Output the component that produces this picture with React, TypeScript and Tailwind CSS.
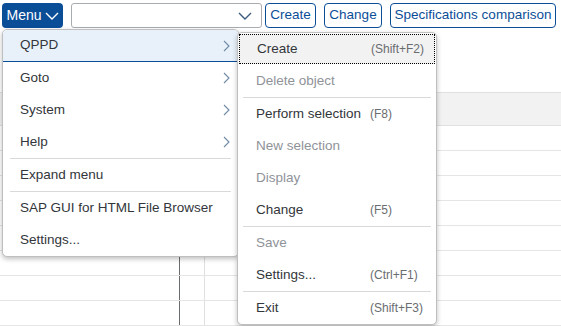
import React from "react";

const Chevron = ({ className = "" }: { className?: string }) => (
  <svg width="7" height="12" viewBox="0 0 7 12" className={className}>
    <path d="M1 1 L6 6 L1 11" fill="none" stroke="currentColor" strokeWidth="1.1" />
  </svg>
);

const ChevronDown = ({ className = "" }: { className?: string }) => (
  <svg width="14" height="8" viewBox="0 0 14 8" className={className}>
    <path d="M1 1 L7 7 L13 1" fill="none" stroke="currentColor" strokeWidth="1.4" />
  </svg>
);

type SubItem = { label: string; shortcut?: string; disabled?: boolean; focused?: boolean } | "sep";

const subItems: SubItem[] = [
  { label: "Create", shortcut: "(Shift+F2)", focused: true },
  { label: "Delete object", disabled: true },
  "sep",
  { label: "Perform selection", shortcut: "(F8)" },
  { label: "New selection", disabled: true },
  { label: "Display", disabled: true },
  { label: "Change", shortcut: "(F5)" },
  "sep",
  { label: "Save", disabled: true },
  { label: "Settings...", shortcut: "(Ctrl+F1)" },
  "sep",
  { label: "Exit", shortcut: "(Shift+F3)" },
];

type MainItem = { label: string; sub?: boolean; active?: boolean } | "sep";
const mainItems: MainItem[] = [
  { label: "QPPD", sub: true, active: true },
  { label: "Goto", sub: true },
  { label: "System", sub: true },
  { label: "Help", sub: true },
  "sep",
  { label: "Expand menu" },
  "sep",
  { label: "SAP GUI for HTML File Browser" },
  { label: "Settings..." },
];

export default function App() {
  const rows = Array.from({ length: 9 });
  return (
    <div
      className="relative h-[326px] w-[561px] overflow-hidden bg-white text-[13.5px] text-[#32363a]"
      style={{ fontFamily: '"Liberation Sans", Arial, sans-serif' }}
    >
      {/* toolbar */}
      <div className="flex items-center pl-[2px] pt-[3px]">
        <div className="flex h-[25px] w-[61px] items-center justify-center gap-[3px] rounded-[4px] bg-[#0b4e98] text-[14px] text-white">
          <span>Menu</span>
          <ChevronDown className="text-white" />
        </div>
        <div className="ml-[8px] flex h-[25px] w-[191px] items-center justify-end rounded-[3px] border border-[#a9adb2] bg-white pr-[9px]">
          <ChevronDown className="text-[#3a5a7e]" />
        </div>
        <div className="ml-[3px] flex h-[25px] w-[51px] items-center justify-center rounded-[4px] border border-[#0b4e98] text-[#0b4e98]">
          Create
        </div>
        <div className="ml-[8px] flex h-[25px] w-[58px] items-center justify-center rounded-[4px] border border-[#0b4e98] text-[#0b4e98]">
          Change
        </div>
        <div className="ml-[8px] flex h-[25px] w-[166px] items-center justify-center rounded-[4px] border border-[#0b4e98] text-[#0b4e98]">
          Specifications comparison
        </div>
      </div>

      {/* table background */}
      <div className="mt-[64px]">
        <div className="h-[34px] border-y border-[#e0e0e0] bg-[#f2f2f2]" />
        {rows.map((_, i) => (
          <div key={i} className="flex h-[25px] border-b border-[#e5e5e5]">
            <div className="w-[180px] border-r border-[#6a6d70]" />
            <div className="w-[25px] border-r border-[#e0e0e0]" />
            <div className="flex-1" />
          </div>
        ))}
      </div>

      {/* main menu */}
      <div className="absolute left-[2px] top-[29px] w-[237px] overflow-hidden rounded-[5px] border border-[#bfbfbf] bg-white shadow-[0_2px_5px_rgba(0,0,0,0.25)]">
        {mainItems.map((it, i) =>
          it === "sep" ? (
            <div key={i} className="mx-[7px] h-px bg-[#d9d9d9]" />
          ) : (
            <div
              key={i}
              className={
                "flex h-[32px] items-center justify-between pl-[17px] pr-[8px] " +
                (it.active ? "border-b border-[#0b4e98] bg-[#e8f1fa]" : "")
              }
            >
              <span>{it.label}</span>
              {it.sub && <Chevron className="text-[#6f8aa8]" />}
            </div>
          )
        )}
      </div>

      {/* submenu */}
      <div className="absolute left-[237px] top-[32px] w-[200px] rounded-[5px] border border-[#bfbfbf] bg-white shadow-[0_2px_5px_rgba(0,0,0,0.25)]">
        {subItems.map((it, i) =>
          it === "sep" ? (
            <div key={i} className="mx-[5px] h-px bg-[#d9d9d9]" />
          ) : (
            <div key={i} className={"h-[32px] " + (it.focused ? "p-px" : "")}>
              <div
                className={
                  "flex h-full items-center " +
                  (it.focused
                    ? "h-[29px] border border-dotted border-black bg-[#f2f2f2] pl-[17px]"
                    : "pl-[18px]")
                }
              >
                <span className={"w-[114px] shrink-0 " + (it.disabled ? "text-[#8f9399]" : "")}>
                  {it.label}
                </span>
                {it.shortcut && <span className="text-[12px] text-[#6a6d70]">{it.shortcut}</span>}
              </div>
            </div>
          )
        )}
      </div>
    </div>
  );
}
